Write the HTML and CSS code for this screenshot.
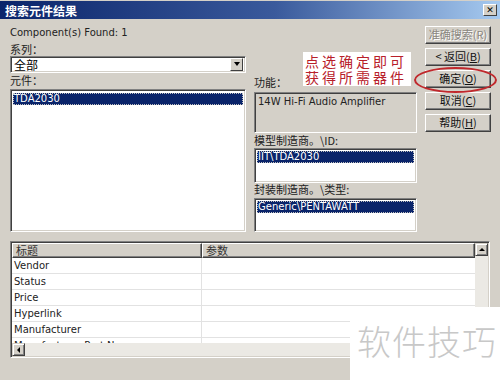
FILE: index.html
```html
<!DOCTYPE html>
<html>
<head>
<meta charset="utf-8">
<link rel="stylesheet" href="styles.css">
</head>
<body>
<div class="window">
  <div class="titlebar">
    <span class="title">搜索元件结果</span>
    <span class="close">✕</span>
  </div>
  <div class="main">
    <div class="col-left">
      <div class="line">Component(s) Found: 1</div>
      <div class="label l-series">系列：</div>
      <div class="combo">
        <span class="combo-text">全部</span>
        <span class="combo-btn"><span class="arrow-down"></span></span>
      </div>
      <div class="label l-comp">元件：</div>
      <div class="listbox big">
        <div class="sel">TDA2030</div>
      </div>
    </div>
    <div class="col-mid">
      <div class="label">功能：</div>
      <div class="readonly">14W Hi-Fi Audio Amplifier</div>
      <div class="label l-model">模型制造商。\ID:</div>
      <div class="listbox small1"><div class="sel">IIT\TDA2030</div></div>
      <div class="label l-pkg">封装制造商。\类型:</div>
      <div class="listbox small2"><div class="sel">Generic\PENTAWATT</div></div>
    </div>
    <div class="col-right">
      <div class="btn disabled">准确搜索(R)</div>
      <div class="btn">&lt; 返回(<u>B</u>)</div>
      <div class="btn">确定(<u>O</u>)</div>
      <div class="btn">取消(<u>C</u>)</div>
      <div class="btn">帮助(<u>H</u>)</div>
    </div>
  </div>
  <div class="table">
    <div class="grid">
      <div class="hdr">
        <div class="hcell c1">标题</div>
        <div class="hcell c2">参数</div>
      </div>
      <div class="row"><div class="cell c1">Vendor</div><div class="cell c2"></div></div>
      <div class="row"><div class="cell c1">Status</div><div class="cell c2"></div></div>
      <div class="row"><div class="cell c1">Price</div><div class="cell c2"></div></div>
      <div class="row"><div class="cell c1">Hyperlink</div><div class="cell c2"></div></div>
      <div class="row"><div class="cell c1">Manufacturer</div><div class="cell c2"></div></div>
      <div class="row"><div class="cell c1">Manufacturer Part No</div><div class="cell c2"></div></div>
    </div>
    <div class="vscroll">
      <div class="sbtn"><span class="arrow-up"></span></div>
      <div class="track"></div>
    </div>
    <div class="hscroll">
      <div class="sbtn"><span class="arrow-left"></span></div>
      <div class="track"></div>
    </div>
  </div>

  <div class="note">点选确定即可<br>获得所需器件</div>
  <div class="ellipse"></div>
  <div class="watermark">软件技巧</div>
</div>
</body>
</html>
```

FILE: styles.css
```css
* { box-sizing: border-box; }
html, body { margin: 0; padding: 0; }
body {
  width: 500px;
  height: 380px;
  overflow: hidden;
  background: #d4d0c8;
  font-family: "DejaVu Sans", "Liberation Sans", "Noto Sans CJK SC", sans-serif;
  font-size: 10px;
  color: #000;
}
.window {
  position: relative;
  width: 500px;
  height: 380px;
  background: #d4d0c8;
  border-bottom: 1px solid #808080;
}
.titlebar {
  margin-top: 1px;
  height: 18px;
  background: linear-gradient(to right, #0a246a 0%, #3a5a9c 55%, #a6caf0 100%);
  display: flex;
  align-items: center;
  justify-content: space-between;
  padding: 0 3px 0 5px;
}
.title {
  color: #fff;
  font-weight: bold;
  font-size: 12px;
  font-family: "Noto Sans CJK SC", sans-serif;
}
.close {
  width: 14px;
  height: 12px;
  background: #d4d0c8;
  border: 1px solid;
  border-color: #fff #404040 #404040 #fff;
  font-size: 9px;
  font-weight: bold;
  line-height: 10px;
  text-align: center;
  color: #000;
}
.main {
  display: flex;
  gap: 8px;
  padding: 0 9px 0 10px;
}
.col-left { width: 236px; padding-top: 8px; display: flex; flex-direction: column; }
.col-mid { width: 163px; padding-top: 57px; display: flex; flex-direction: column; }
.col-right { width: 66px; padding-top: 7px; display: flex; flex-direction: column; gap: 4px; }
.line { height: 12px; line-height: 12px; font-size: 10px; color: #222; }
.label {
  height: 13px;
  line-height: 13px;
  font-size: 11px;
  font-family: "Noto Sans CJK SC", sans-serif;
  color: #222;
}
.l-series { margin-top: 4px; }
.l-comp { margin-top: 1px; }
.l-model { margin-top: 1px; }
.l-pkg { margin-top: 0; }
.combo {
  height: 17px;
  background: #fff;
  border: 1px solid;
  border-color: #808080 #fff #fff #808080;
  box-shadow: inset 1px 1px #404040, inset -1px -1px #d4d0c8;
  display: flex;
  align-items: center;
  justify-content: space-between;
  padding: 1px 2px 2px 3px;
}
.combo-text { font-size: 12px; font-family: "Noto Sans CJK SC", sans-serif; line-height: 13px; }
.combo-btn {
  width: 13px;
  height: 13px;
  background: #d4d0c8;
  border: 1px solid;
  border-color: #fff #404040 #404040 #fff;
  display: flex;
  align-items: center;
  justify-content: center;
}
.arrow-down { width: 0; height: 0; border-left: 3px solid transparent; border-right: 3px solid transparent; border-top: 4px solid #000; }
.arrow-up { width: 0; height: 0; border-left: 3px solid transparent; border-right: 3px solid transparent; border-bottom: 3px solid #000; }
.arrow-left { width: 0; height: 0; border-top: 3px solid transparent; border-bottom: 3px solid transparent; border-right: 3px solid #000; }
.listbox {
  background: #fff;
  border: 1px solid;
  border-color: #808080 #fff #fff #808080;
  box-shadow: inset 1px 1px #404040, inset -1px -1px #d4d0c8;
  padding: 3px 2px 2px 2px;
}
.listbox.big { margin-top: 2px; height: 143px; }
.listbox.small1 { margin-top: 1px; height: 35px; padding-top: 2px; }
.listbox.small2 { margin-top: 2px; height: 34px; padding-top: 2px; }
.sel {
  background: #0a246a;
  color: #fff;
  height: 12px;
  line-height: 12px;
  font-size: 10px;
  padding-left: 1px;
  outline: 1px dotted #c0c0c0;
  outline-offset: -1px;
}
.readonly {
  margin-top: 3px;
  height: 41px;
  background: #d4d0c8;
  border: 1px solid;
  border-color: #808080 #fff #fff #808080;
  box-shadow: inset 1px 1px #404040, inset -1px -1px #d4d0c8;
  padding: 3px 3px;
  font-size: 10px;
  line-height: 12px;
  color: #222;
}
.btn {
  height: 18px;
  background: #d4d0c8;
  border: 1px solid;
  border-color: #fff #404040 #404040 #fff;
  box-shadow: inset -1px -1px #808080;
  font-family: "Noto Sans CJK SC", "DejaVu Sans", sans-serif;
  font-size: 11px;
  line-height: 15px;
  text-align: center;
  color: #111;
}
.btn u { text-decoration: underline; }
.btn.disabled { color: #8a8780; text-shadow: 1px 1px #fff; }
.table {
  margin: 9px 10px 0 10px;
  height: 117px;
  border: 1px solid;
  border-color: #808080 #fff #fff #808080;
  box-shadow: inset 1px 1px #404040, inset -1px -1px #d4d0c8;
  padding: 1px;
  display: grid;
  grid-template-columns: 1fr 13px;
  grid-template-rows: 1fr 13px;
  background: #fff;
}
.grid { overflow: hidden; background: #fff; }
.hdr { display: flex; height: 15px; }
.hcell {
  background: #d4d0c8;
  border: 1px solid;
  border-color: #fff #404040 #404040 #fff;
  box-shadow: inset -1px -1px #808080;
  font-family: "Noto Sans CJK SC", sans-serif;
  font-size: 11px;
  line-height: 13px;
  padding-left: 3px;
  color: #333;
}
.c1 { width: 190px; flex: none; }
.c2 { flex: 1; }
.row { display: flex; height: 16px; border-bottom: 1px solid #e2e2e2; }
.cell {
  font-size: 10px;
  line-height: 15px;
  padding-left: 2px;
  color: #222;
}
.cell.c1 { border-right: 1px solid #e2e2e2; }
.vscroll {
  grid-column: 2;
  grid-row: 1;
  display: flex;
  flex-direction: column;
  background: #ebe9e4;
}
.hscroll {
  grid-column: 1 / span 2;
  grid-row: 2;
  display: flex;
  background: #ebe9e4;
}
.sbtn {
  width: 13px;
  height: 13px;
  flex: none;
  background: #d4d0c8;
  border: 1px solid;
  border-color: #d4d0c8 #404040 #404040 #d4d0c8;
  box-shadow: inset 1px 1px #fff, inset -1px -1px #808080;
  display: flex;
  align-items: center;
  justify-content: center;
}
.track { flex: 1; }
.note {
  position: absolute;
  left: 303px;
  top: 51px;
  width: 108px;
  padding: 1px 0 1px 2px;
  background: #fff;
  color: #b8202a;
  font-family: "Noto Sans CJK SC", sans-serif;
  font-size: 14px;
  line-height: 16px;
  letter-spacing: 3px;
}
.ellipse {
  position: absolute;
  left: 414px;
  top: 66px;
  width: 83px;
  height: 26px;
  border: 2px solid #c0282c;
  border-radius: 50%;
}
.watermark {
  position: absolute;
  left: 350px;
  top: 306px;
  width: 150px;
  height: 74px;
  background: #fff;
  color: #c8c8c8;
  font-family: "Noto Sans CJK SC", sans-serif;
  font-weight: 300;
  font-size: 34px;
  line-height: 40px;
  padding: 14px 0 0 7px;
  letter-spacing: 1px;
}
```
